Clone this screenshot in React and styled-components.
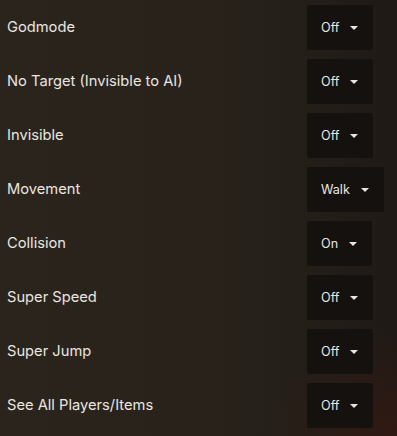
import styled, { createGlobalStyle } from 'styled-components';

const GlobalStyle = createGlobalStyle`
  html, body {
    margin: 0;
    padding: 0;
    height: 100%;
  }
  body {
    background: #221d18;
    font-family: Inter, "Noto Sans", sans-serif;
    color: #e9e6e1;
  }
`;

const Panel = styled.div`
  width: 397px;
  height: 436px;
  overflow: hidden;
  background:
    radial-gradient(ellipse 130px 110px at 397px 436px, rgba(70, 22, 14, 0.45), rgba(70, 22, 14, 0) 100%),
    linear-gradient(90deg, #2a241c 0%, #28221b 55%, #1f1a16 100%);
`;

const List = styled.div`
  display: flex;
  flex-direction: column;
`;

const Row = styled.div`
  display: grid;
  grid-template-columns: 307px auto;
  align-items: center;
  height: 54px;
`;

const Label = styled.span`
  padding-left: 7px;
  font-size: 14.7px;
  color: #e9e6e1;
`;

const Select = styled.button`
  justify-self: start;
  display: flex;
  align-items: center;
  gap: 11px;
  height: 45px;
  padding: 0 15px 0 14px;
  border: none;
  border-radius: 2px;
  background: #15110f;
  color: #e9e6e1;
  font-family: Inter, "Noto Sans", sans-serif;
  font-size: 12.6px;
  cursor: pointer;
`;

const Caret = styled.span`
  width: 0;
  height: 0;
  border-left: 4px solid transparent;
  border-right: 4px solid transparent;
  border-top: 4px solid #e9e6e1;
  margin-top: 1px;
`;

const options = [
  { label: 'Godmode', value: 'Off' },
  { label: 'No Target (Invisible to AI)', value: 'Off' },
  { label: 'Invisible', value: 'Off' },
  { label: 'Movement', value: 'Walk' },
  { label: 'Collision', value: 'On' },
  { label: 'Super Speed', value: 'Off' },
  { label: 'Super Jump', value: 'Off' },
  { label: 'See All Players/Items', value: 'Off' },
];

const App = () => {
  return (
    <>
      <GlobalStyle />
      <Panel>
        <List>
          {options.map(o => (
            <Row key={o.label}>
              <Label>{o.label}</Label>
              <Select>
                {o.value}
                <Caret />
              </Select>
            </Row>
          ))}
        </List>
      </Panel>
    </>
  );
};

export default App;
